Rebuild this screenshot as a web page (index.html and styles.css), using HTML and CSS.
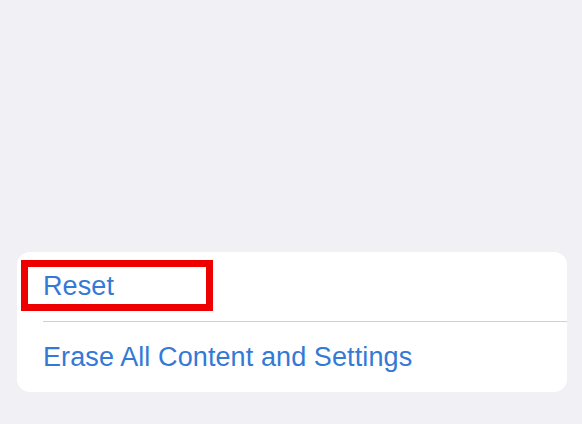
FILE: index.html
```html
<!DOCTYPE html>
<html lang="en">
<head>
    <meta charset="UTF-8">
    <meta name="viewport" content="width=device-width, initial-scale=1.0">
    <title>Reset</title>
    <link rel="stylesheet" href="styles.css">
</head>
<body>
    <!-- Settings group -->
    <div class="group">
        <div class="row">
            <span class="label">Reset</span>
            <div class="highlight"></div>
        </div>
        <div class="row">
            <span class="label">Erase All Content and Settings</span>
        </div>
    </div>
</body>
</html>
```

FILE: styles.css
```css
html, body {
    margin: 0;
    padding: 0;
    background-color: #f0f0f5;
    height: 100%;
}
body {
    font-family: "Liberation Sans", Arial, sans-serif;
    padding: 252px 15px 0 17px;
    box-sizing: border-box;
}
.group {
    background-color: #fff;
    border-radius: 13px;
}
.row {
    position: relative;
    height: 69px;
    margin-left: 26px;
    display: flex;
    align-items: center;
}
.row + .row {
    border-top: 1px solid #cfcfd3;
    height: 70px;
}
.label {
    color: #3479d6;
    font-size: 27px;
    letter-spacing: 0.1px;
}
.highlight {
    position: absolute;
    left: -22px;
    top: 8px;
    width: 178px;
    height: 37px;
    border: 7px solid #ee0000;
}
```
